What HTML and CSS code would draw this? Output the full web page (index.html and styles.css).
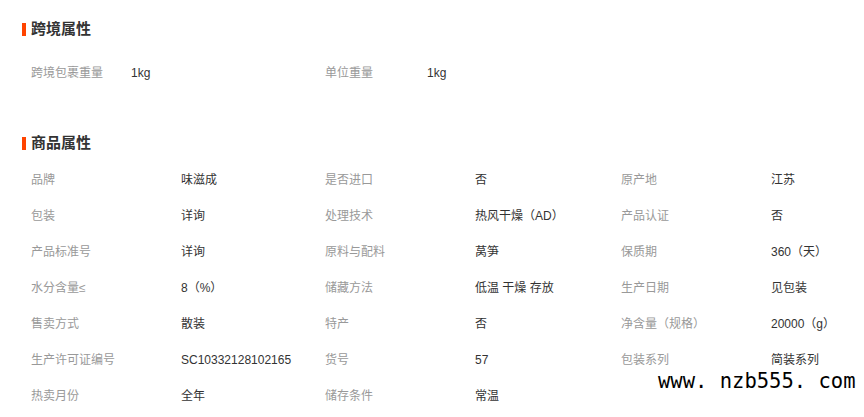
FILE: index.html
```html
<!DOCTYPE html>
<html lang="zh-CN">
<head>
  <meta charset="UTF-8">
  <title>商品属性</title>
  <link rel="stylesheet" href="styles.css">
</head>
<body>
  <div class="page">

    <div class="section section-cross">
      <div class="section-title">跨境属性</div>
      <div class="attr-grid attr-grid-short">
        <div class="attr"><span class="attr-label">跨境包裹重量</span><span class="attr-value">1kg</span></div>
        <div class="attr"><span class="attr-label">单位重量</span><span class="attr-value">1kg</span></div>
      </div>
    </div>

    <div class="section section-goods">
      <div class="section-title">商品属性</div>
      <div class="attr-grid">
        <div class="attr"><span class="attr-label">品牌</span><span class="attr-value">味滋成</span></div>
        <div class="attr"><span class="attr-label">是否进口</span><span class="attr-value">否</span></div>
        <div class="attr"><span class="attr-label">原产地</span><span class="attr-value">江苏</span></div>

        <div class="attr"><span class="attr-label">包装</span><span class="attr-value">详询</span></div>
        <div class="attr"><span class="attr-label">处理技术</span><span class="attr-value">热风干燥（AD）</span></div>
        <div class="attr"><span class="attr-label">产品认证</span><span class="attr-value">否</span></div>

        <div class="attr"><span class="attr-label">产品标准号</span><span class="attr-value">详询</span></div>
        <div class="attr"><span class="attr-label">原料与配料</span><span class="attr-value">莴笋</span></div>
        <div class="attr"><span class="attr-label">保质期</span><span class="attr-value">360（天）</span></div>

        <div class="attr"><span class="attr-label">水分含量≤</span><span class="attr-value">8（%）</span></div>
        <div class="attr"><span class="attr-label">储藏方法</span><span class="attr-value">低温 干燥 存放</span></div>
        <div class="attr"><span class="attr-label">生产日期</span><span class="attr-value">见包装</span></div>

        <div class="attr"><span class="attr-label">售卖方式</span><span class="attr-value">散装</span></div>
        <div class="attr"><span class="attr-label">特产</span><span class="attr-value">否</span></div>
        <div class="attr"><span class="attr-label">净含量（规格）</span><span class="attr-value">20000（g）</span></div>

        <div class="attr"><span class="attr-label">生产许可证编号</span><span class="attr-value">SC10332128102165</span></div>
        <div class="attr"><span class="attr-label">货号</span><span class="attr-value">57</span></div>
        <div class="attr"><span class="attr-label">包装系列</span><span class="attr-value">简装系列</span></div>

        <div class="attr"><span class="attr-label">热卖月份</span><span class="attr-value">全年</span></div>
        <div class="attr"><span class="attr-label">储存条件</span><span class="attr-value">常温</span></div>
      </div>
    </div>

    <div class="watermark">www. nzb555. com</div>
  </div>
</body>
</html>
```

FILE: styles.css
```css
body {
  margin: 0;
  padding: 0;
  background: #ffffff;
  font-family: "Liberation Sans", "Noto Sans CJK SC", sans-serif;
  font-size: 12px;
  color: #333;
}

.page {
  position: relative;
  width: 864px;
  height: 417px;
  overflow: hidden;
  padding: 20px 0 0 22px;
  box-sizing: border-box;
}

.section-title {
  display: flex;
  align-items: center;
  gap: 5px;
  height: 18px;
  line-height: 18px;
  font-size: 15px;
  font-weight: bold;
  color: #333;
}

.section-title::before {
  content: "";
  display: block;
  width: 4px;
  height: 13px;
  background: #ff4400;
}

.section-cross .section-title {
  margin-bottom: 17px;
}

.section-cross {
  margin-bottom: 43px;
}

.section-goods .section-title {
  margin-bottom: 10px;
}

.attr-grid {
  display: grid;
  grid-template-columns: 294px 296px 240px;
  padding-left: 9px;
}

.attr {
  display: flex;
  height: 36px;
  line-height: 36px;
  white-space: nowrap;
}

.attr-label {
  width: 150px;
  flex-shrink: 0;
  color: #999;
}

.attr-grid-short .attr-label {
  width: 100px;
}

.attr-grid-short .attr:nth-child(2) .attr-label {
  width: 102px;
}

.attr-value {
  color: #333;
}

.watermark {
  position: absolute;
  left: 658px;
  top: 371px;
  line-height: 20px;
  font-family: "DejaVu Sans Mono", monospace;
  font-size: 20.5px;
  color: #000;
  white-space: pre;
}
```
